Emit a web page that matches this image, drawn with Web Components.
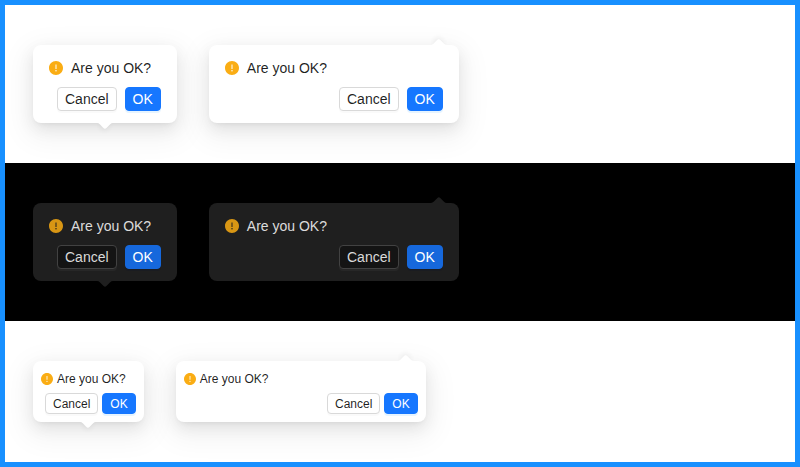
<!DOCTYPE html>
<html lang="en">
<head>
<meta charset="utf-8">
<title>Popconfirm</title>
<style>
html, body { margin: 0; height: 100%; }
body { font-family: "Liberation Sans", Arial, sans-serif; }
</style>
</head>
<body>
<demo-frame>
  <theme-band theme="light"><pop-confirm placement="top">Are you OK?</pop-confirm><pop-confirm placement="bottom-right" wide>Are you OK?</pop-confirm></theme-band>
  <theme-band theme="dark"><pop-confirm placement="top">Are you OK?</pop-confirm><pop-confirm placement="bottom-right" wide>Are you OK?</pop-confirm></theme-band>
  <theme-band theme="compact"><pop-confirm placement="top">Are you OK?</pop-confirm><pop-confirm placement="bottom-right" wide>Are you OK?</pop-confirm></theme-band>
</demo-frame>
<script>
const define = (name, html) => {
  const template = document.createElement('template');
  template.innerHTML = html;
  customElements.define(name, class extends HTMLElement {
    constructor() {
      super();
      this.attachShadow({ mode: 'open' }).append(template.content.cloneNode(true));
    }
  });
};

define('demo-frame', `
<style>
:host { display: flex; flex-direction: column; box-sizing: border-box; height: 467px; border: 5px solid #1890ff; background: #fff; overflow: hidden; }
</style>
<slot></slot>`);

define('theme-band', `
<style>
:host {
  display: flex; align-items: flex-start; gap: 32px; padding: 40px 28px;
  background: #fff; color: rgba(0,0,0,.88);
  --panel: #fff; --warning: #faad14; --primary: #1677ff;
  --btn-bg: #fff; --btn-border: #d9d9d9;
  --btn-shadow: 0 2px 0 rgba(0,0,0,.02); --primary-shadow: 0 2px 0 rgba(5,145,255,.1);
  --size: 14px; --line: 22px; --pad: 12px 16px; --gap: 8px; --btn-height: 24px;
}
:host([theme="dark"]) {
  background: #000; color: rgba(255,255,255,.85);
  --panel: #1f1f1f; --warning: #d89614; --primary: #1668dc;
  --btn-bg: #141414; --btn-border: #424242;
  --btn-shadow: 0 2px 0 rgba(255,255,255,.04); --primary-shadow: 0 2px 0 rgba(0,15,50,.15);
}
:host([theme="compact"]) {
  --size: 12px; --line: 20px; --pad: 8px; --gap: 4px; --btn-height: 21px;
}
</style>
<slot></slot>`);

define('warning-icon', `
<style>
:host { display: block; flex: none; width: var(--size); height: var(--size); color: var(--warning); }
svg { display: block; width: 100%; height: 100%; }
</style>
<svg viewBox="64 64 896 896" fill="currentColor"><path d="M512 64C264.6 64 64 264.6 64 512s200.6 448 448 448 448-200.6 448-448S759.4 64 512 64zm-32 232c0-4.4 3.6-8 8-8h48c4.4 0 8 3.6 8 8v272c0 4.4-3.6 8-8 8h-48c-4.4 0-8-3.6-8-8V296zm32 440a48.01 48.01 0 010-96 48.01 48.01 0 010 96z"/></svg>`);

define('small-button', `
<style>
:host { display: block; }
button {
  display: flex; align-items: center; justify-content: center; box-sizing: border-box;
  height: var(--btn-height); margin: 0; padding: 0 7px; border: 1px solid var(--btn-border); border-radius: 4px;
  background: var(--btn-bg); color: inherit; font: inherit; line-height: var(--line); box-shadow: var(--btn-shadow);
}
:host([primary]) button { background: var(--primary); border-color: var(--primary); color: #fff; box-shadow: var(--primary-shadow); }
</style>
<button type="button"><slot></slot></button>`);

define('pop-arrow', `
<style>
:host { display: block; width: 16px; height: 16px; overflow: hidden; pointer-events: none; }
:host::before {
  content: ""; position: absolute; bottom: 0; left: 0; width: 16px; height: 8px; background: var(--panel); z-index: 1;
  clip-path: path('M 0 8 A 4 4 0 0 0 2.828 6.828 L 6.586 3.071 A 2 2 0 0 1 9.414 3.071 L 13.172 6.828 A 4 4 0 0 0 16 8 Z');
}
:host::after {
  content: ""; position: absolute; bottom: 0; left: 0; right: 0; margin: auto; width: 8.97px; height: 8.97px;
  border-radius: 0 0 2px 0; transform: translateY(50%) rotate(-135deg); box-shadow: 2px 2px 5px rgba(0,0,0,.05);
}
</style>`);

define('pop-confirm', `
<style>
:host { display: block; position: relative; font-size: var(--size); line-height: var(--line); }
:host([wide]) { width: 250px; }
.panel {
  display: flex; flex-direction: column; gap: var(--gap); padding: var(--pad); border-radius: 8px; background: var(--panel);
  box-shadow: 0 6px 16px 0 rgba(0,0,0,.08), 0 3px 6px -4px rgba(0,0,0,.12), 0 9px 28px 8px rgba(0,0,0,.05);
}
.message { display: flex; align-items: center; gap: var(--gap); white-space: nowrap; }
.buttons { display: flex; justify-content: flex-end; gap: var(--gap); padding-left: var(--gap); }
pop-arrow { position: absolute; }
:host([placement="top"]) pop-arrow { top: 100%; left: 50%; transform: translateX(-50%) rotate(180deg); }
:host([placement="bottom-right"]) pop-arrow { bottom: 100%; right: 12px; }
</style>
<pop-arrow></pop-arrow>
<div class="panel">
  <div class="message"><warning-icon></warning-icon><span><slot></slot></span></div>
  <div class="buttons"><small-button>Cancel</small-button><small-button primary>OK</small-button></div>
</div>`);
</script>
</body>
</html>
